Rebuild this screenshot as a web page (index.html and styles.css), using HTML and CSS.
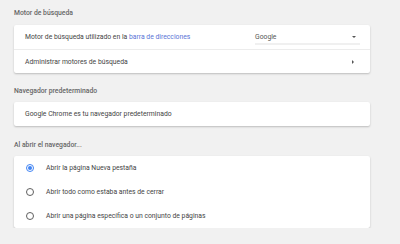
FILE: index.html
```html
<!DOCTYPE html>
<html lang="es">
<head>
    <meta charset="UTF-8">
    <title>Configuración</title>
    <link rel="stylesheet" href="styles.css">
</head>
<body>
    <div class="settings">
        <h2 class="section-title first">Motor de búsqueda</h2>
        <div class="card">
            <div class="row">
                <span class="label">Motor de búsqueda utilizado en la <a href="#" class="link">barra de direcciones</a></span>
                <div class="select">
                    <span>Google</span>
                    <span class="arrow-down"></span>
                </div>
            </div>
            <div class="row divided">
                <span class="label">Administrar motores de búsqueda</span>
                <span class="arrow-right"></span>
            </div>
        </div>

        <h2 class="section-title">Navegador predeterminado</h2>
        <div class="card">
            <div class="row">
                <span class="label">Google Chrome es tu navegador predeterminado</span>
            </div>
        </div>

        <h2 class="section-title last">Al abrir el navegador...</h2>
        <div class="card">
            <label class="row radio-row">
                <span class="radio checked"></span>
                <span class="label">Abrir la página Nueva pestaña</span>
            </label>
            <label class="row radio-row">
                <span class="radio"></span>
                <span class="label">Abrir todo como estaba antes de cerrar</span>
            </label>
            <label class="row radio-row">
                <span class="radio"></span>
                <span class="label">Abrir una página específica o un conjunto de páginas</span>
            </label>
        </div>
    </div>
</body>
</html>
```

FILE: styles.css
```css
body {
    margin: 0;
    background-color: #f1f1f1;
    font-family: Roboto, "Liberation Sans", sans-serif;
    font-size: 6.8px;
    color: #444;
}
.settings {
    width: 356px;
    padding-left: 14px;
}
.section-title {
    margin: 0;
    padding: 13px 0 6px;
    font-size: 6.8px;
    font-weight: 500;
    line-height: 10px;
    color: #666;
}
.section-title.first {
    padding-top: 8px;
    padding-bottom: 7px;
}
.section-title.last {
    padding-top: 14px;
}
.card {
    background-color: #fff;
    border-radius: 2px;
    box-shadow: 0 1px 2px rgba(0, 0, 0, 0.22);
}
.row {
    display: flex;
    align-items: center;
    height: 24px;
    padding: 0 11px;
}
.row.divided {
    border-top: 1px solid #ececec;
    height: 23px;
}
.label {
    flex: 1;
}
.link {
    color: #5a74d6;
    text-decoration: none;
}
.select {
    display: flex;
    align-items: center;
    justify-content: space-between;
    width: 105px;
    height: 12px;
    margin-top: 2px;
    margin-right: -1px;
    color: #555;
    border-bottom: 2px solid #f0f0f0;
}
.arrow-down {
    width: 0;
    height: 0;
    margin-right: 4px;
    border-left: 2.5px solid transparent;
    border-right: 2.5px solid transparent;
    border-top: 2.5px solid #555;
}
.arrow-right {
    width: 0;
    height: 0;
    margin-right: 5px;
    border-top: 2px solid transparent;
    border-bottom: 2px solid transparent;
    border-left: 2px solid #555;
}
.radio-row {
    padding-left: 12px;
}
.radio {
    box-sizing: border-box;
    width: 8px;
    height: 8px;
    margin-right: 12px;
    border: 1px solid #5f5f5f;
    border-radius: 50%;
    display: flex;
    align-items: center;
    justify-content: center;
}
.radio.checked {
    border-color: #4285f4;
}
.radio.checked::after {
    content: "";
    width: 4px;
    height: 4px;
    border-radius: 50%;
    background-color: #4285f4;
}
```
